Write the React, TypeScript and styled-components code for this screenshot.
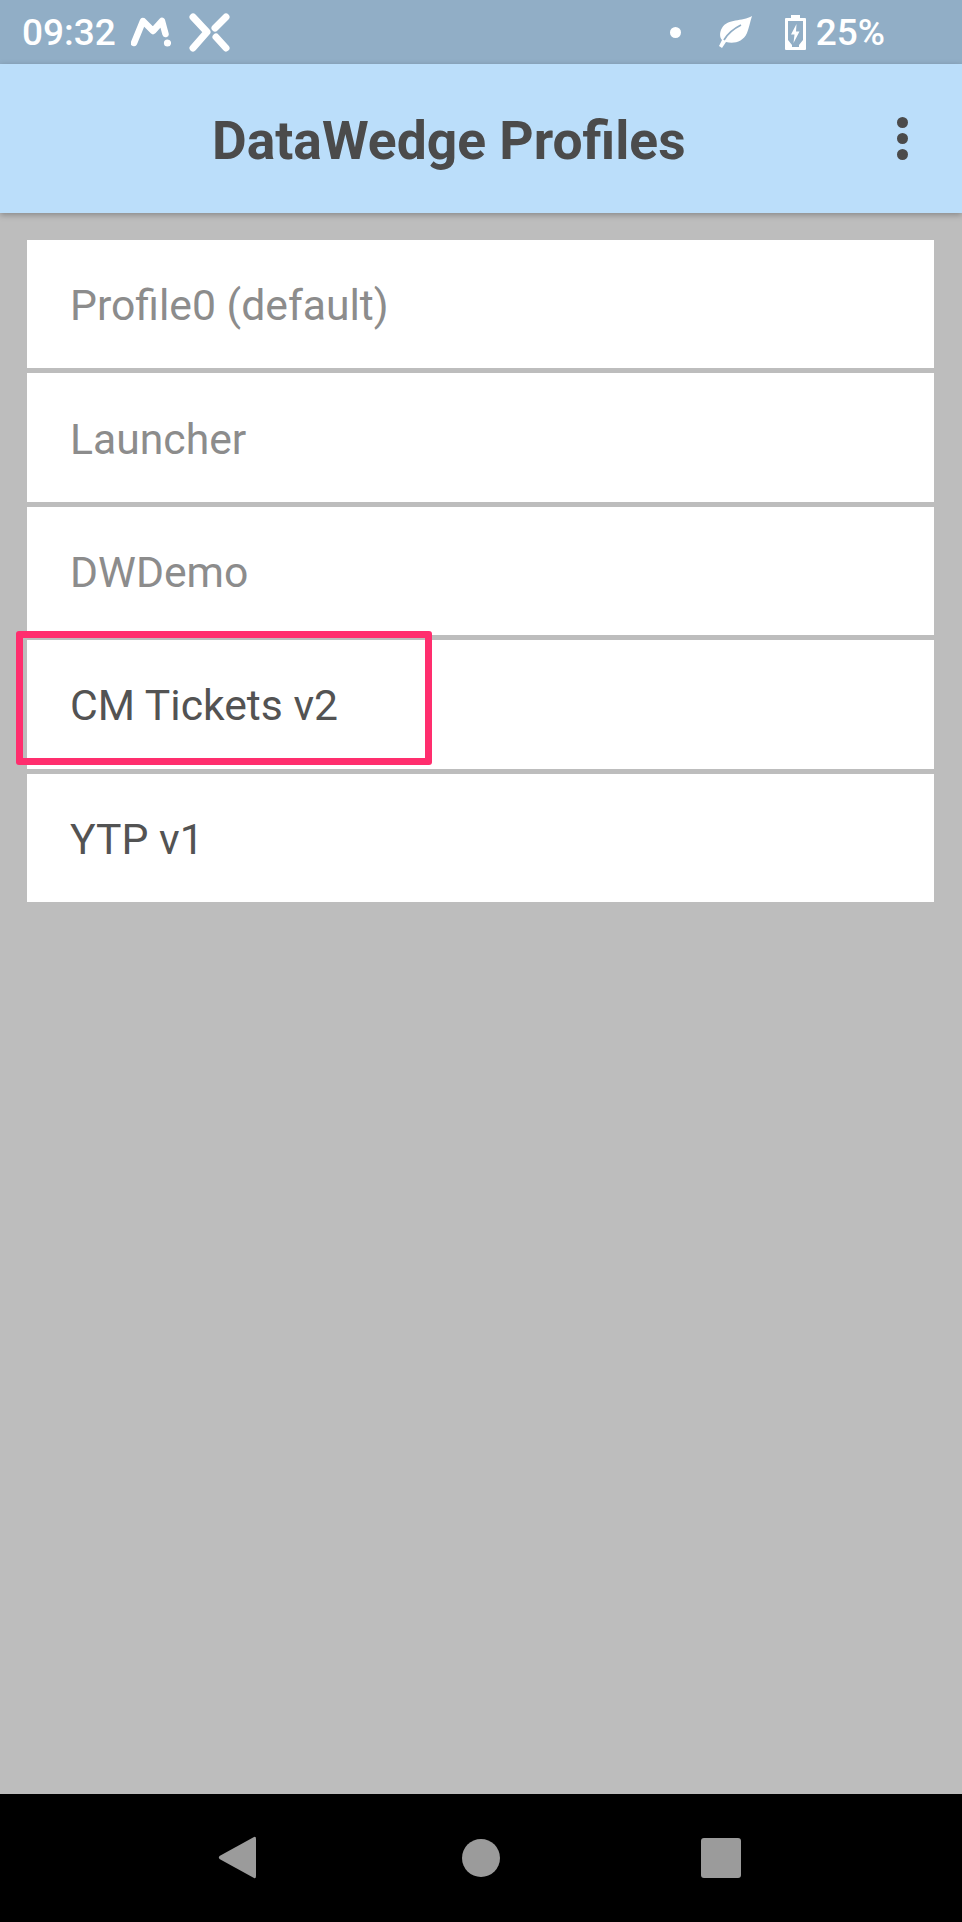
import React from 'react';
import styled, { createGlobalStyle } from 'styled-components';

const Global = createGlobalStyle`
  html, body { margin: 0; padding: 0; background: #bdbdbd; }
  body { font-family: Roboto, "Liberation Sans", sans-serif; }
`;

const Screen = styled.div`
  width: 962px;
  height: 1922px;
  display: flex;
  flex-direction: column;
  overflow: hidden;
  background: #bdbdbd;
`;

const StatusBar = styled.div`
  height: 64px;
  flex: none;
  display: flex;
  align-items: center;
  padding: 0 77px 0 22px;
  background: #91aec6;
  color: #fff;
`;

const StatusText = styled.span<{ $gap?: number }>`
  font-size: 37px;
  font-weight: 500;
  line-height: 64px;
  padding-top: 2px;
  margin-left: ${(p) => p.$gap ?? 0}px;
`;

const Spacer = styled.div`
  flex: 1;
`;

const StatusIcon = styled.svg<{ $gap: number }>`
  display: block;
  flex: none;
  margin-left: ${(p) => p.$gap}px;
`;

const AppBar = styled.header`
  position: relative;
  z-index: 1;
  height: 149px;
  flex: none;
  display: flex;
  align-items: center;
  padding: 0 54px 0 212px;
  background: #bbdefa;
  box-shadow: 0 2px 6px rgba(0, 0, 0, 0.28);
`;

const Title = styled.h1`
  flex: 1;
  margin: 0;
  padding-top: 4px;
  font-size: 53.4px;
  font-weight: 700;
  line-height: 145px;
  color: #4b4b4b;
`;

const MenuDots = styled.div`
  display: flex;
  flex-direction: column;
  gap: 5px;
`;

const Dot = styled.span`
  width: 11px;
  height: 11px;
  border-radius: 50%;
  background: #4b4b4b;
`;

const List = styled.main`
  flex: 1;
  display: flex;
  flex-direction: column;
  gap: 5px;
  padding: 27px 28px 0 27px;
`;

const Row = styled.div<{ $disabled: boolean }>`
  position: relative;
  height: 128.4px;
  display: flex;
  align-items: center;
  padding: 2px 0 0 43px;
  box-sizing: border-box;
  background: #fff;
  font-size: 42.7px;
  color: ${(p) => (p.$disabled ? '#8c8c8c' : '#535353')};
`;

const Highlight = styled.div`
  position: absolute;
  left: -11px;
  top: -9.5px;
  width: 416px;
  height: 134px;
  box-sizing: border-box;
  border: 7px solid #ff2e6e;
  border-radius: 3px;
`;

const NavBar = styled.nav`
  height: 128.5px;
  flex: none;
  background: #000;
  display: flex;
  align-items: center;
  padding: 0 0 0 218px;
`;

const NavTriangle = styled.svg`
  display: block;
  flex: none;
`;

const NavCircle = styled.div`
  width: 38px;
  height: 38px;
  margin-left: 205.5px;
  border-radius: 50%;
  background: #9b9b9b;
`;

const NavSquare = styled.div`
  width: 40px;
  height: 40px;
  margin-left: 201px;
  border-radius: 3px;
  background: #9b9b9b;
`;

const rows = [
  { name: 'Profile0 (default)', disabled: true },
  { name: 'Launcher', disabled: true },
  { name: 'DWDemo', disabled: true },
  { name: 'CM Tickets v2', disabled: false, marked: true },
  { name: 'YTP v1', disabled: false },
];

export default function App() {
  return (
    <Screen>
      <Global />
      <StatusBar>
        <StatusText>09:32</StatusText>
        <StatusIcon $gap={15} width="40" height="34" viewBox="0 0 40 34" fill="none" stroke="#fff" strokeLinecap="round" strokeLinejoin="round">
          <path d="M3 28 L12 6 L22 16 L31 6 L34.5 19" strokeWidth="6.5" />
          <circle cx="36.5" cy="28" r="3.6" fill="#fff" stroke="none" />
        </StatusIcon>
        <StatusIcon $gap={18} width="42" height="42" viewBox="0 0 42 42" fill="none" stroke="#fff" strokeWidth="7" strokeLinecap="round" strokeLinejoin="round">
          <path d="M4 6 L18 21 L4 37" />
          <path d="M37 6 L26 17" />
          <path d="M27 26 L37 37" />
        </StatusIcon>
        <Spacer />
        <StatusIcon $gap={0} width="13" height="13" viewBox="0 0 13 13">
          <circle cx="6.5" cy="6.5" r="5.5" fill="#fff" />
        </StatusIcon>
        <StatusIcon $gap={36} width="34" height="32" viewBox="0 0 34 32">
          <path d="M34 0 C24 6 10 2 4 12 C1 17 2 22 4 24 L1 30 L4 32 L8 26 C16 28 25 26 29 17 C31 12 32 6 34 0 Z" fill="#fff" />
          <path d="M6 24 C10 17 15 13 23 9" fill="none" stroke="#91aec6" strokeWidth="1.8" />
        </StatusIcon>
        <StatusIcon $gap={33} width="21" height="35" viewBox="0 0 21 35">
          <path fillRule="evenodd" fill="#fff" d="M6 0 H15 V3 H20 A1 1 0 0 1 21 4 V34 A1 1 0 0 1 20 35 H1 A1 1 0 0 1 0 34 V4 A1 1 0 0 1 1 3 H6 Z M3 6 V25 L7 30 V32 H14 V30 L18 25 V6 Z" />
          <path fill="#fff" d="M11.5 9 L6 19.5 H9.5 L8.5 28 L14.5 16.5 H11 Z" />
        </StatusIcon>
        <StatusText $gap={10}>25%</StatusText>
      </StatusBar>
      <AppBar>
        <Title>DataWedge Profiles</Title>
        <MenuDots>
          <Dot />
          <Dot />
          <Dot />
        </MenuDots>
      </AppBar>
      <List>
        {rows.map((r) => (
          <Row key={r.name} $disabled={r.disabled}>
            {r.name}
            {r.marked && <Highlight />}
          </Row>
        ))}
      </List>
      <NavBar>
        <NavTriangle width="38" height="43" viewBox="0 0 38 43">
          <path d="M36 1 Q38 0 38 3 V40 Q38 43 36 42 L1.5 23 Q0 21.5 1.5 20 Z" fill="#9b9b9b" />
        </NavTriangle>
        <NavCircle />
        <NavSquare />
      </NavBar>
    </Screen>
  );
}
